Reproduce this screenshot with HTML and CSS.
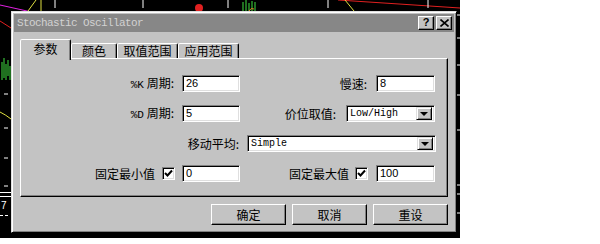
FILE: index.html
```html
<!DOCTYPE html>
<html lang="zh-CN">
<head>
  <meta charset="UTF-8">
  <title>Stochastic Oscillator</title>
  <link rel="stylesheet" href="styles.css">
</head>
<body>

  <div class="chart">
    <svg class="chart-lines" width="460" height="238" viewBox="0 0 460 238">
      <line x1="0" y1="5" x2="36" y2="13" stroke="#e020e0" stroke-width="1"/>
      <line x1="0" y1="21" x2="11" y2="28" stroke="#e02020" stroke-width="1"/>
      <line x1="41" y1="0" x2="41" y2="11" stroke="#e0e040" stroke-width="1"/>
      <line x1="36" y1="0" x2="28" y2="11" stroke="#e0e040" stroke-width="1"/>
      <line x1="55" y1="0" x2="55" y2="8" stroke="#fff" stroke-width="1"/>
      <line x1="143" y1="0" x2="143" y2="8" stroke="#fff" stroke-width="1"/>
      <circle cx="199" cy="8" r="4" fill="#e02020"/>
      <line x1="228" y1="0" x2="228" y2="8" stroke="#fff" stroke-width="1"/>
      <path d="M243 11 V2 M246 11 V0 M249 11 V3 M252 11 V1 M255 11 V2" stroke="#40e040" stroke-width="1"/>
      <path d="M249 11 q2 -4 5 -2" stroke="#e08020" fill="none" stroke-width="1"/>
      <line x1="328" y1="0" x2="328" y2="8" stroke="#fff" stroke-width="1"/>
      <line x1="338" y1="0" x2="460" y2="8" stroke="#e02020" stroke-width="1"/>
      <line x1="345" y1="0" x2="354" y2="11" stroke="#e0e040" stroke-width="1"/>
      <line x1="428" y1="0" x2="428" y2="8" stroke="#fff" stroke-width="1"/>
      <path d="M2 80 V62 M4 78 V58 M6 80 V64 M8 76 V60 M10 80 V66" stroke="#40e040" stroke-width="1"/>
      <path d="M0 112 q6 3 11 7" stroke="#e0e040" fill="none" stroke-width="1"/>
      <path d="M4 94 H8 M4 128 H8 M4 158 H8 M4 186 H8" stroke="#fff" stroke-width="1"/>
      <path d="M0 192.5 H11 M0 196.5 H11" stroke="#fff" stroke-width="1"/>
      <path d="M0 215.5 H3 M5 215.5 H8" stroke="#fff" stroke-width="1"/>
      <text x="1" y="209" fill="#fff" font-family="Liberation Sans" font-size="10">7</text>
      <path d="M457 15 H460 M457 38 H460 M457 65 H460 M457 95 H460 M457 130 H460 M457 185 H460 M457 194 H460 M457 213 H460" stroke="#fff" stroke-width="1"/>
    </svg>

    <div class="dialog">
      <div class="titlebar">
        <span class="title">Stochastic Oscillator</span>
        <div class="title-buttons">
          <div class="tbtn help">?</div>
          <div class="tbtn">
            <svg width="9" height="8" viewBox="0 0 9 8">
              <path d="M0.5 0.5 L8.5 7.5 M8.5 0.5 L0.5 7.5" stroke="#000" stroke-width="1.6"/>
            </svg>
          </div>
        </div>
      </div>

      <div class="tabs">
        <div class="tab active">参数</div>
        <div class="tab tab-color">颜色</div>
        <div class="tab tab-wide">取值范围</div>
        <div class="tab tab-wide">应用范围</div>
      </div>

      <div class="panel">
        <div class="row">
          <label class="lbl lbl-a"><span class="mono">%K</span> 周期:</label>
          <div class="field field-a">26</div>
          <label class="lbl lbl-b">慢速:</label>
          <div class="field field-b">8</div>
        </div>

        <div class="row">
          <label class="lbl lbl-a"><span class="mono">%D</span> 周期:</label>
          <div class="field field-a">5</div>
          <label class="lbl lbl-c">价位取值:</label>
          <div class="field select select-short">
            <span class="mono">Low/High</span>
            <div class="drop"><i></i></div>
          </div>
        </div>

        <div class="row">
          <label class="lbl lbl-d">移动平均:</label>
          <div class="field select select-long">
            <span class="mono">Simple</span>
            <div class="drop"><i></i></div>
          </div>
        </div>

        <div class="row">
          <label class="lbl lbl-e">固定最小值</label>
          <div class="check">
            <svg width="9" height="9" viewBox="0 0 9 9"><path d="M1 4 L3.5 6.5 L8 1.5" stroke="#000" stroke-width="2" fill="none"/></svg>
          </div>
          <div class="field field-a">0</div>
          <label class="lbl lbl-f">固定最大值</label>
          <div class="check">
            <svg width="9" height="9" viewBox="0 0 9 9"><path d="M1 4 L3.5 6.5 L8 1.5" stroke="#000" stroke-width="2" fill="none"/></svg>
          </div>
          <div class="field field-b">100</div>
        </div>
      </div>

      <div class="actions">
        <div class="btn">确定</div>
        <div class="btn">取消</div>
        <div class="btn">重设</div>
      </div>
    </div>
  </div>

</body>
</html>
```

FILE: styles.css
```css
body {
  margin: 0;
  background: #fff;
  font-family: "Noto Sans CJK SC", "Liberation Sans", sans-serif;
  font-size: 12px;
  color: #000;
}

.chart {
  position: relative;
  width: 460px;
  height: 238px;
  background: #000;
  padding: 11px 0 0 11px;
  box-sizing: border-box;
}

.chart-lines {
  position: absolute;
  top: 0;
  left: 0;
}

.mono {
  font-family: "Liberation Mono", monospace;
  font-size: 11px;
}

/* dialog frame */
.dialog {
  position: relative;
  width: 446px;
  height: 222px;
  box-sizing: border-box;
  background: #c3c3c3;
  border: 1px solid;
  border-color: #dfdfdf #000 #000 #dfdfdf;
  box-shadow: inset 1px 1px #fff, inset -1px -1px #808080;
  padding: 2px;
}

.titlebar {
  height: 18px;
  background: #878787;
  display: flex;
  align-items: center;
  justify-content: space-between;
  padding: 0 2px 0 3px;
}

.title {
  font-family: "Liberation Mono", monospace;
  font-size: 11px;
  letter-spacing: -0.6px;
  color: #d2d2d2;
}

.title-buttons {
  display: flex;
  gap: 2px;
}

.tbtn {
  width: 16px;
  height: 14px;
  box-sizing: border-box;
  background: #c3c3c3;
  border: 1px solid;
  border-color: #fff #000 #000 #fff;
  box-shadow: inset -1px -1px #808080;
  display: flex;
  align-items: center;
  justify-content: center;
}

.tbtn.help {
  font-family: "Liberation Sans", sans-serif;
  font-weight: bold;
  font-size: 11px;
  line-height: 1;
  padding-bottom: 1px;
}

/* tabs */
.tabs {
  display: flex;
  align-items: flex-end;
  height: 19px;
  margin: 7px 0 0 6px;
  position: relative;
  z-index: 1;
}

.tab {
  height: 15px;
  box-sizing: border-box;
  padding: 0;
  white-space: nowrap;
  border: 1px solid;
  border-bottom: none;
  border-color: #fff #000 transparent #fff;
  border-radius: 2px 2px 0 0;
  box-shadow: inset -1px 0 #808080;
  background: #c3c3c3;
  display: flex;
  align-items: center;
  justify-content: center;
  line-height: 1;
}

.tab.active {
  width: 51px;
  height: 21px;
  margin-bottom: -2px;
  padding-bottom: 3px;
}

.tab-color {
  width: 46px;
}

.tab-wide {
  width: 61px;
}

/* panel */
.panel {
  margin-left: 6px;
  width: 428px;
  height: 139px;
  box-sizing: border-box;
  border: 1px solid;
  border-color: #fff #000 #000 #fff;
  box-shadow: inset -1px -1px #808080;
  padding-top: 16px;
  display: flex;
  flex-direction: column;
  gap: 13px;
}

.row {
  display: flex;
  align-items: center;
  height: 17px;
}

.lbl {
  text-align: right;
  white-space: nowrap;
  line-height: 17px;
}

.lbl-a { width: 153px; margin-right: 8px; }
.lbl-b { width: 127px; margin-right: 9px; }
.lbl-c { width: 96px; margin-right: 10px; }
.lbl-d { width: 218px; margin-right: 8px; }
.lbl-e { width: 134px; margin-right: 7px; }
.lbl-f { width: 109px; margin-right: 6px; }

.field {
  height: 17px;
  box-sizing: border-box;
  background: #fff;
  border: 1px solid;
  border-color: #808080 #fff #fff #808080;
  box-shadow: inset 1px 1px #000, inset -1px -1px #dfdfdf;
  padding: 0 3px;
  font-family: "Liberation Sans", sans-serif;
  font-size: 11px;
  line-height: 15px;
}

.field-a { width: 58px; }
.field-b { width: 59px; }

.select {
  display: flex;
  align-items: center;
  justify-content: space-between;
  padding: 0 2px 0 3px;
}

.select-short { width: 89px; }
.select-long { width: 189px; }

.select .mono {
  font-size: 10px;
}

.drop {
  width: 16px;
  height: 13px;
  box-sizing: border-box;
  background: #c3c3c3;
  border: 1px solid;
  border-color: #dfdfdf #000 #000 #dfdfdf;
  box-shadow: inset 1px 1px #fff, inset -1px -1px #808080;
  display: flex;
  align-items: center;
  justify-content: center;
}

.drop i {
  width: 0;
  height: 0;
  border-left: 4px solid transparent;
  border-right: 4px solid transparent;
  border-top: 4px solid #000;
}

.check {
  width: 13px;
  height: 13px;
  box-sizing: border-box;
  background: #fff;
  border: 1px solid;
  border-color: #808080 #fff #fff #808080;
  box-shadow: inset 1px 1px #000, inset -1px -1px #dfdfdf;
  display: flex;
  align-items: center;
  justify-content: center;
  margin-right: 7px;
}

.row .lbl-f + .check {
  margin-right: 8px;
}

/* bottom buttons */
.actions {
  display: flex;
  justify-content: flex-end;
  gap: 6px;
  margin-top: 7px;
  width: 434px;
}

.btn {
  width: 75px;
  height: 21px;
  box-sizing: border-box;
  background: #c3c3c3;
  border: 1px solid;
  border-color: #fff #000 #000 #fff;
  box-shadow: inset -1px -1px #808080;
  display: flex;
  align-items: center;
  justify-content: center;
  line-height: 1;
}
```
